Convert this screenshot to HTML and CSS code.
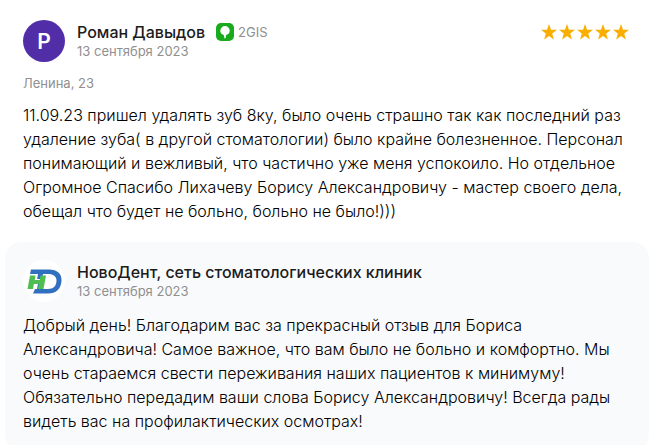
FILE: index.html
```html
<!DOCTYPE html>
<html lang="ru">
    <head>
        <meta charset="utf-8">
        <meta name="viewport" content="width=device-width, initial-scale=1.0">
        <title>Отзывы</title>
        <link rel="stylesheet" href="styles.css">
    </head>
    <body>
        <article class="review">
            <header class="head">
                <span class="avatar" aria-hidden="true">Р</span>
                <div class="who">
                    <div class="name-row">
                        <h2 class="name">Роман Давыдов</h2>
                        <span class="source">
                            <svg width="18" height="18" viewBox="0 0 18 18" aria-hidden="true">
                                <rect width="18" height="18" rx="5" fill="#19aa1e"/>
                                <path d="M9 3a4.700 4.700 0 0 0-4.700 4.700c0 2.400 1.500 3.600 2.900 4.100.8.300 1 1.200 1.100 3.400h1.400c.1-2.200.3-3.100 1.100-3.400 1.400-.5 2.900-1.700 2.900-4.100A4.700 4.700 0 0 0 9 3z" fill="#fff"/>
                            </svg>
                            2GIS
                        </span>
                    </div>
                    <time class="date" datetime="2023-09-13">13 сентября 2023</time>
                </div>
                <div class="stars" role="img" aria-label="5 из 5">
                    <svg width="88" height="16" viewBox="0 0 88 16">
                        <defs>
                            <path id="star" d="M8 0l2 5.700 6 .1-4.800 3.700 1.700 5.900L8 11.900l-4.900 3.500 1.700-5.900L0 5.800l6-.1z"/>
                        </defs>
                        <g fill="#f9ae00">
                            <use href="#star"/>
                            <use href="#star" x="18"/>
                            <use href="#star" x="36"/>
                            <use href="#star" x="54"/>
                            <use href="#star" x="72"/>
                        </g>
                    </svg>
                </div>
            </header>
            <p class="address">Ленина, 23</p>
            <p class="text">11.09.23 пришел удалять зуб 8ку, было очень страшно так как последний раз удаление зуба( в другой стоматологии) было крайне болезненное. Персонал понимающий и вежливый, что частично уже меня успокоило. Но отдельное Огромное Спасибо Лихачеву Борису Александровичу - мастер своего дела, обещал что будет не больно, больно не было!)))</p>
        </article>
        <section class="reply">
            <header class="head">
                <span class="avatar logo" aria-hidden="true">
                    <svg width="42" height="42" viewBox="0 0 42 42">
                        <path d="M8 9.500h18c8 0 13 4 12.500 11.500C38 29 33 33.500 25 33.500H10l2-4.500h2l1-5h5l-1 5h6c5.500 0 8.500-3.500 8.500-8.500 0-4-3-6.500-8.500-6.500h-5l-.8 5h-5l.8-5H7z" fill="#3070bf"/>
                        <path d="M7 15.500h5.500l-.8 4.500h5l.8-4.500H23L20.500 29H15l.9-5h-5l-.9 5H4.500z" fill="#50bd52"/>
                    </svg>
                </span>
                <div class="who">
                    <h2 class="name">НовоДент, сеть стоматологических клиник</h2>
                    <time class="date" datetime="2023-09-13">13 сентября 2023</time>
                </div>
            </header>
            <p class="text">Добрый день! Благодарим вас за прекрасный отзыв для Бориса Александровича! Самое важное, что вам было не больно и комфортно. Мы очень стараемся свести переживания наших пациентов к минимуму! Обязательно передадим ваши слова Борису Александровичу! Всегда рады видеть вас на профилактических осмотрах!</p>
        </section>
    </body>
</html>
```
FILE: styles.css
```css
body {font-family: Inter, "Liberation Sans", sans-serif;font-size: 16px;margin: 0;background: #fff;color: #1c1c1c;}
h2, p {margin: 0;}
.review {padding: 20px 24px 19px 23px;}
.head {
    display: flex;
    align-items: center;
    gap: 12px;
}
.avatar {
    display: flex;
    flex: none;
    align-items: center;
    justify-content: center;
    width: 42px;
    height: 42px;
    border-radius: 50%;
    background: #512da8;
    color: #fff;
    font-size: 21px;
    font-weight: 600;
}
.logo {background: #fff;}
.who {flex: 1;}
.name-row {display: flex;gap: 11px;}
.name {font-size: 16px;font-weight: 500;line-height: 20px;}
.source {
    display: flex;
    align-items: center;
    gap: 4px;
    font-size: 13px;
    line-height: 20px;
    color: #8f8f8f;
}
.date {display: block;font-size: 13px;line-height: 18px;color: #8f8f8f;}
.stars {align-self: flex-start;padding: 4px 0;}
.stars svg {display: block;}
.address {margin-top: 12px;font-size: 13px;line-height: 18px;color: #8f8f8f;}
.text {margin-top: 11px;font-weight: 300;line-height: 24px;color: #000;}
.reply {
    margin: 0 4px 0 5px;
    padding: 18px;
    border-radius: 16px;
    background: #f9fafc;
}
```
